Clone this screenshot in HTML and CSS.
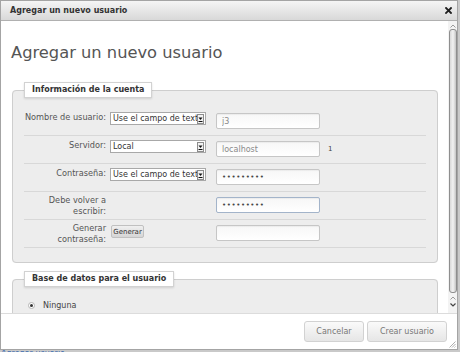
FILE: index.html
```html
<!DOCTYPE html>
<html lang="es">
<head>
<meta charset="utf-8">
<title>Agregar un nuevo usuario</title>
<link rel="stylesheet" href="styles.css">
</head>
<body>
<div class="dialog">
  <div class="titlebar">
    <span class="title">Agregar un nuevo usuario</span>
    <svg class="close" width="7" height="7" viewBox="0 0 7 7"><path d="M1 1L6 6M6 1L1 6" stroke="#1e1e1e" stroke-width="1.8" stroke-linecap="square"/></svg>
  </div>
  <div class="main">
    <div class="scrollarea">
      <h1 class="heading">Agregar un nuevo usuario</h1>
      <fieldset class="group">
        <legend class="legend">Información de la cuenta</legend>
        <div class="row">
          <div class="label">Nombre de usuario:</div>
          <div class="cell"><div class="select"><span class="sel-text">Use el campo de texto</span><span class="sel-arrow"><svg width="7" height="10" viewBox="0 0 7 10"><rect x="0.5" y="0.5" width="6" height="9" fill="#f2f2f2" stroke="#8c8c8c"/><path d="M1.5 3.5h4L3.5 6z" fill="#111"/><path d="M1.5 7.5h4" stroke="#111"/></svg></span></div></div>
          <input class="field" type="text" value="j3" readonly>
        </div>
        <div class="row">
          <div class="label">Servidor:</div>
          <div class="cell"><div class="select"><span class="sel-text">Local</span><span class="sel-arrow"><svg width="7" height="10" viewBox="0 0 7 10"><rect x="0.5" y="0.5" width="6" height="9" fill="#f2f2f2" stroke="#8c8c8c"/><path d="M1.5 3.5h4L3.5 6z" fill="#111"/><path d="M1.5 7.5h4" stroke="#111"/></svg></span></div></div>
          <input class="field" type="text" value="localhost" readonly>
          <span class="note">1</span>
        </div>
        <div class="row">
          <div class="label">Contraseña:</div>
          <div class="cell"><div class="select"><span class="sel-text">Use el campo de texto</span><span class="sel-arrow"><svg width="7" height="10" viewBox="0 0 7 10"><rect x="0.5" y="0.5" width="6" height="9" fill="#f2f2f2" stroke="#8c8c8c"/><path d="M1.5 3.5h4L3.5 6z" fill="#111"/><path d="M1.5 7.5h4" stroke="#111"/></svg></span></div></div>
          <input class="field pw" type="password" value="123456789" readonly>
        </div>
        <div class="row">
          <div class="label two">Debe volver a escribir:</div>
          <div class="cell"></div>
          <input class="field pw focus" type="password" value="123456789" readonly>
        </div>
        <div class="row">
          <div class="label two">Generar contraseña:</div>
          <div class="cell"><button class="gen-btn" type="button">Generar</button></div>
          <input class="field" type="text" value="" readonly>
        </div>
      </fieldset>
      <fieldset class="group second">
        <legend class="legend">Base de datos para el usuario</legend>
        <div class="radio-row">
          <span class="radio"><span class="radio-dot"></span></span>
          <span class="radio-label">Ninguna</span>
        </div>
      </fieldset>
    </div>
    <div class="scrollbar">
      <div class="sb-top"><svg width="6" height="4" viewBox="0 0 6 4"><path d="M0.5 3.5L3 1L5.5 3.5" fill="none" stroke="#9a9a9a"/></svg></div>
      <div class="sb-thumb"></div>
      <div class="sb-arrows">
        <svg width="6" height="4" viewBox="0 0 6 4"><path d="M0.5 3.5L3 1L5.5 3.5" fill="none" stroke="#9a9a9a"/></svg>
        <svg width="6" height="4" viewBox="0 0 6 4"><path d="M0.5 0.5L3 3L5.5 0.5" fill="none" stroke="#444" stroke-width="1.2"/></svg>
      </div>
    </div>
  </div>
  <div class="buttonpane">
    <button class="btn cancel" type="button">Cancelar</button>
    <button class="btn create" type="button">Crear usuario</button>
  </div>
  <svg class="grip" width="7" height="7" viewBox="0 0 7 7"><path d="M6.5 0.5L0.5 6.5M6.5 3L3 6.5M6.5 5.5L5.5 6.5" stroke="#999" stroke-width="0.8"/></svg>
</div>
<div class="pagelink">Agregar usuario</div>
</body>
</html>
```
FILE: styles.css
```css
* { box-sizing: border-box; }
html, body { margin: 0; padding: 0; }
body {
  width: 460px;
  height: 352px;
  overflow: hidden;
  background: #c9c9c9;
  font-family: "DejaVu Sans", "Liberation Sans", sans-serif;
}
.dialog {
  position: relative;
  width: 458px;
  height: 350px;
  border: 1px solid #a4a4a4;
  background: #fff;
  display: flex;
  flex-direction: column;
}
.titlebar {
  flex: none;
  height: 20px;
  border-bottom: 1px solid #b0b0b0;
  background: linear-gradient(#f5f5f5, #d8d8d8);
  display: flex;
  align-items: center;
  justify-content: space-between;
  padding: 0 5px 0 9px;
  font-size: 8px;
  font-weight: bold;
  color: #333;
}
.close { display: block; }
.main {
  flex: none;
  height: 292px;
  display: flex;
}
.scrollarea {
  flex: 1;
  overflow: hidden;
  padding: 0 10px 0 11px;
}
.heading {
  margin: 22px 0 19px -1px;
  font-size: 16.3px;
  line-height: 20px;
  font-weight: normal;
  color: #555;
}
.group {
  margin: 0;
  padding: 10px 11px 14px 11px;
  border: 1px solid #cecece;
  border-radius: 4px;
  background: #ededed;
  min-width: 0;
}
.group.second {
  margin-top: 8px;
  padding-top: 14px;
}
.legend {
  padding: 0 7px;
  height: 16px;
  line-height: 14px;
  border: 1px solid #d2d2d2;
  background: #fff;
  box-shadow: 0 1px 2px rgba(0, 0, 0, 0.12);
  font-size: 8px;
  font-weight: bold;
  color: #333;
}
.row {
  display: flex;
  align-items: flex-start;
  height: 28px;
  border-bottom: 1px solid #d8d8d8;
}
.label {
  flex: none;
  width: 82px;
  text-align: right;
  font-size: 8.2px;
  line-height: 11px;
  color: #555;
  padding-top: 4px;
}
.label.two { padding-top: 3px; }
.cell {
  flex: none;
  width: 96px;
  margin-left: 4px;
}
.select {
  margin-top: 4px;
  width: 96px;
  height: 13px;
  border: 1px solid #a8a8a8;
  background: #fff;
  display: flex;
  align-items: center;
  font-size: 8px;
  line-height: 11px;
  color: #333;
}
.sel-text {
  flex: 1;
  overflow: hidden;
  white-space: nowrap;
  padding-left: 2px;
}
.sel-arrow {
  flex: none;
  width: 8px;
  height: 11px;
  display: flex;
  align-items: center;
}
.sel-arrow svg { display: block; }
.field {
  flex: none;
  margin: 5px 0 0 10px;
  width: 104px;
  height: 16px;
  border: 1px solid #c6c6c6;
  border-radius: 2px;
  background: linear-gradient(#f7f7f7, #fff);
  box-shadow: inset 0 1px 1px rgba(0, 0, 0, 0.05);
  font-family: "DejaVu Sans", sans-serif;
  font-size: 8px;
  color: #8a8a8a;
  padding: 0 5px;
  outline: none;
}
.field.pw {
  color: #444;
  font-size: 7px;
  letter-spacing: 0.6px;
}
.field.focus { border-color: #a3b4ca; }
.note {
  margin: 9px 0 0 8px;
  font-size: 7px;
  color: #444;
}
.gen-btn {
  display: block;
  margin: 5px 0 0 1px;
  height: 13px;
  width: 33px;
  padding: 0;
  font-family: "DejaVu Sans", sans-serif;
  font-size: 7px;
  color: #333;
  border: 1px solid #c0c0c0;
  border-radius: 2px;
  background: linear-gradient(#f0f0f0, #d5d5d5);
}
.radio-row {
  display: flex;
  align-items: center;
  padding-left: 4px;
}
.radio {
  width: 7px;
  height: 7px;
  border: 1px solid #b5b5b5;
  border-radius: 50%;
  background: #fff;
  display: flex;
  align-items: center;
  justify-content: center;
}
.radio-dot {
  width: 3px;
  height: 3px;
  border-radius: 50%;
  background: #333;
}
.radio-label {
  margin-left: 8px;
  font-size: 8px;
  color: #444;
}
.scrollbar {
  flex: none;
  width: 9px;
  background: #f3f3f3;
  display: flex;
  flex-direction: column;
  align-items: center;
}
.sb-top {
  height: 8px;
  display: flex;
  align-items: center;
  justify-content: center;
  padding-top: 1px;
}
.sb-top svg, .sb-arrows svg { display: block; }
.sb-thumb {
  width: 8px;
  height: 264px;
  border: 1px solid #8e8e8e;
  border-radius: 3px;
  background: linear-gradient(to right, #d8d8d8, #f2f2f2 50%, #c4c4c4);
}
.sb-arrows {
  margin-top: 3px;
  display: flex;
  flex-direction: column;
  align-items: center;
  gap: 3px;
}
.buttonpane {
  flex: none;
  height: 36px;
  border-top: 1px solid #dcdcdc;
  display: flex;
  justify-content: flex-end;
  align-items: flex-start;
  gap: 3px;
  padding: 7px 10px 0 0;
}
.btn {
  height: 21px;
  padding: 0;
  font-family: "DejaVu Sans", sans-serif;
  font-size: 8px;
  color: #777;
  border: 1px solid #d2d2d2;
  border-radius: 3px;
  background: linear-gradient(#fafafa, #e6e6e6);
}
.btn.cancel { width: 60px; }
.btn.create { width: 80px; }
.grip {
  position: absolute;
  right: 1px;
  bottom: 1px;
}
.pagelink {
  font-size: 8px;
  line-height: 8px;
  color: #3b6cb0;
  padding-left: 1px;
}
```
